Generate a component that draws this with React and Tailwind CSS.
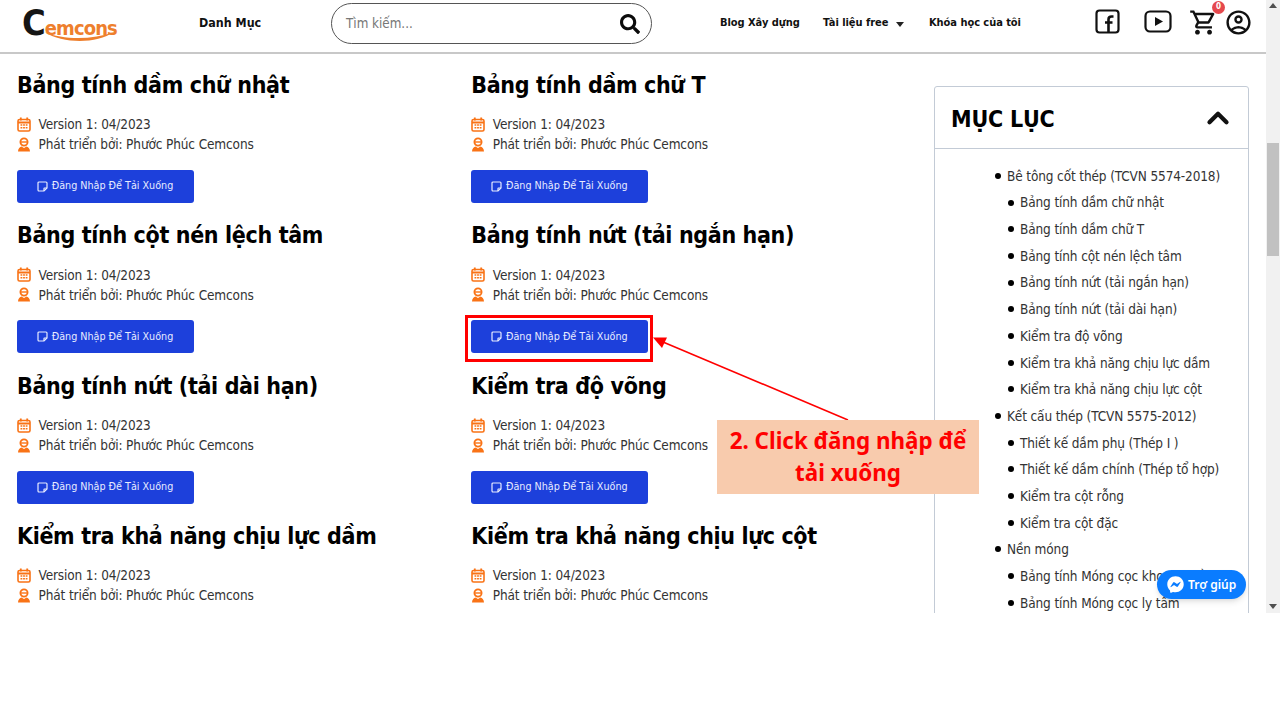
import React from "react";
import { ChevronUp } from "lucide-react";
import { FaSearch, FaFacebookMessenger } from "react-icons/fa";
import { MdOutlineShoppingCart, MdOutlineAccountCircle } from "react-icons/md";

const cards = [
  "Bảng tính dầm chữ nhật", "Bảng tính dầm chữ T",
  "Bảng tính cột nén lệch tâm", "Bảng tính nứt (tải ngắn hạn)",
  "Bảng tính nứt (tải dài hạn)", "Kiểm tra độ võng",
  "Kiểm tra khả năng chịu lực dầm", "Kiểm tra khả năng chịu lực cột",
];

const toc = [
  [1, "Bê tông cốt thép (TCVN 5574-2018)"],
  [2, "Bảng tính dầm chữ nhật"],
  [2, "Bảng tính dầm chữ T"],
  [2, "Bảng tính cột nén lệch tâm"],
  [2, "Bảng tính nứt (tải ngắn hạn)"],
  [2, "Bảng tính nứt (tải dài hạn)"],
  [2, "Kiểm tra độ võng"],
  [2, "Kiểm tra khả năng chịu lực dầm"],
  [2, "Kiểm tra khả năng chịu lực cột"],
  [1, "Kết cấu thép (TCVN 5575-2012)"],
  [2, "Thiết kế dầm phụ (Thép I )"],
  [2, "Thiết kế dầm chính (Thép tổ hợp)"],
  [2, "Kiểm tra cột rỗng"],
  [2, "Kiểm tra cột đặc"],
  [1, "Nền móng"],
  [2, "Bảng tính Móng cọc khoan nhồi"],
  [2, "Bảng tính Móng cọc ly tâm"],
];

function CalIcon() {
  return (
    <svg width="14" height="15" viewBox="0 0 14 15" fill="none" className="shrink-0">
      <rect x="1" y="2.500" width="12" height="11.500" rx="1.600" stroke="#f97316" strokeWidth="1.600" />
      <path d="M1 5.500h12" stroke="#f97316" strokeWidth="2" />
      <path d="M3.800 0.500v3M10.200 0.500v3" stroke="#f97316" strokeWidth="1.800" />
      <path d="M3.500 8h1.800M6.100 8h1.800M8.700 8h1.800M3.500 10.800h1.800M6.100 10.800h1.800M8.700 10.800h1.800" stroke="#f97316" strokeWidth="1.500" />
    </svg>
  );
}

function DevIcon() {
  return (
    <svg width="14" height="15" viewBox="0 0 14 15" fill="none" className="shrink-0">
      <circle cx="7" cy="5" r="3.6" stroke="#f97316" strokeWidth="1.800" />
      <path d="M4 5h6" stroke="#f97316" strokeWidth="1.400" />
      <path d="M1 14.500c0-3 2-4.500 3.500-5L7 11l2.500-1.500c1.500.5 3.500 2 3.500 5z" fill="#f97316" />
    </svg>
  );
}

function NoteIcon() {
  return (
    <svg width="11" height="11" viewBox="0 0 11 11" fill="none" stroke="currentColor" strokeWidth="1.200" className="shrink-0">
      <path d="M2 1h7a1 1 0 0 1 1 1v5L7 10H2a1 1 0 0 1-1-1V2a1 1 0 0 1 1-1z" />
      <path d="M10 7H7.500a.5.5 0 0 0-.5.5V10" />
    </svg>
  );
}

function Card({ title, last }) {
  return (
    <div className="h-[150.3px] w-[454.300px] shrink-0">
      <h2 className="h-[33px] text-[23px] leading-[33px] font-bold tracking-[-0.35px] text-black">{title}</h2>
      <div className="mt-[12.500px] flex h-[20px] items-center gap-[7.500px] text-[13.500px] tracking-[-0.13px] text-[#333]">
        <CalIcon />
        <span>Version 1: 04/2023</span>
      </div>
      <div className="flex h-[20px] items-center gap-[7.500px] text-[13.500px] tracking-[-0.13px] text-[#333]">
        <DevIcon />
        <span>Phát triển bởi: Phước Phúc Cemcons</span>
      </div>
      {!last && (
        <button className="mt-[15.500px] -ml-[0.5px] flex h-[33px] w-[177px] items-center justify-center gap-[4px] rounded-[3px] bg-[#1d40db] text-[10.700px] text-[#e8ecff]">
          <NoteIcon />
          <span>Đăng Nhập Để Tải Xuống</span>
        </button>
      )}
    </div>
  );
}

function Logo() {
  return (
    <div className="relative h-[38px] w-[100px] leading-none">
      <div className="flex items-baseline font-bold">
        <span className="text-[36px] leading-[36px] text-[#151515]">C</span>
        <span className="-ml-[1px] text-[20px] tracking-[-0.9px] text-[#ee7f2d]">emcons</span>
      </div>
      <svg width="72" height="12" viewBox="0 0 72 12" className="absolute left-[22px] top-[26px]">
        <path d="M0 1C20 9 48 9 70 1C52 13 20 13 0 1z" fill="#ee7f2d" />
      </svg>
    </div>
  );
}

function Header() {
  return (
    <header className="flex h-[54px] shrink-0 items-center border-b-2 border-[#c8c8c8] pb-[5px] pl-[22px] pr-[13px]">
      <Logo />
      <div className="-mt-[1px] ml-[77px] w-[132px] text-[12.400px] font-bold text-[#111]">Danh Mục</div>
      <div className="flex h-[41px] w-[321px] items-center justify-between rounded-full border border-[#555] pl-[14px] pr-[11px]">
        <span className="text-[13.300px] text-[#777]">Tìm kiếm...</span>
        <FaSearch size={20} color="#0b0b0b" />
      </div>
      <nav className="ml-[68px] flex items-center text-[11px] font-bold tracking-[-0.05px] whitespace-nowrap text-[#111]">
        <span className="w-[103px]">Blog Xây dựng</span>
        <span className="w-[64px]">Tài liệu free</span>
        <span className="ml-[9px] mt-[1px] h-0 w-0 border-x-[4.500px] border-t-[5px] border-x-transparent border-t-[#222]" />
        <span className="ml-[25px] w-[92px]">Khóa học của tôi</span>
      </nav>
      <div className="-mt-[3px] ml-[74px] flex items-center">
        <svg width="26" height="26" viewBox="0 0 26 26" fill="none" stroke="#111" strokeWidth="2.200">
          <rect x="1.500" y="1.500" width="22" height="22" rx="3" />
          <path d="M18.500 7.500h-2c-2 0-3 1-3 3V23.500M10 13.500h7.500" strokeWidth="2.600" />
        </svg>
        <svg width="28" height="24" viewBox="0 0 28 24" fill="none" stroke="#111" strokeWidth="2.200" className="ml-[23px]">
          <rect x="1.500" y="1.500" width="25" height="20" rx="4.500" />
          <path d="M11 7l8 4.500-8 4.500z" fill="#111" stroke="none" />
        </svg>
        <div className="relative ml-[17px]">
          <MdOutlineShoppingCart size={29} color="#111" />
          <span className="absolute -right-[7px] -top-[7px] flex h-[13px] w-[13px] items-center justify-center rounded-full bg-[#e5484d] text-[8px] font-bold text-white">0</span>
        </div>
        <MdOutlineAccountCircle size={29} color="#111" className="ml-[6px]" />
      </div>
    </header>
  );
}

function Sidebar() {
  return (
    <aside className="mt-[32px] h-[600px] w-[315px] shrink-0 rounded-[3px] border border-[#c3cbd6]">
      <div className="flex h-[62px] items-center justify-between border-b border-[#c3cbd6] pl-[16px] pr-[13px]">
        <span className="mt-[3px] text-[23px] font-bold tracking-[-0.2px] text-black">MỤC LỤC</span>
        <ChevronUp size={34} strokeWidth={3} color="#111" />
      </div>
      <ul className="pl-[60px] pt-[13.500px] text-[13.500px] tracking-[-0.13px] text-[#333]">
        {toc.map(([lvl, text], i) => (
          <li key={i} className={`flex h-[26.700px] items-center whitespace-nowrap ${lvl === 2 ? "pl-[13px]" : ""}`}>
            <span className="mr-[6px] h-[6px] w-[6px] shrink-0 rounded-full bg-black" />
            {text}
          </li>
        ))}
      </ul>
    </aside>
  );
}

function Scrollbar() {
  return (
    <div className="flex h-full w-[14px] shrink-0 flex-col items-center bg-[#f1f1f1]">
      <span className="mt-[3px] h-0 w-0 border-x-[4px] border-b-[5px] border-x-transparent border-b-[#505050]" />
      <span className="mt-[135px] h-[113px] w-[12px] bg-[#c1c1c1]" />
      <span className="mt-auto mb-[4px] h-0 w-0 border-x-[4px] border-t-[5px] border-x-transparent border-t-[#505050]" />
    </div>
  );
}

export default function App() {
  return (
    <div className="relative h-[720px] w-[1280px] overflow-hidden bg-white font-['DejaVu_Sans_Condensed','DejaVu_Sans',sans-serif] [font-stretch:condensed]">
      <div className="flex h-[613px]">
        <div className="flex min-w-0 flex-1 flex-col">
          <Header />
          <div className="flex min-h-0 flex-1 overflow-hidden pl-[17px]">
            <div className="flex w-[917px] shrink-0 flex-wrap content-start pt-[15px]">
              {cards.map((t, i) => <Card key={t} title={t} last={i >= 6} />)}
            </div>
            <Sidebar />
          </div>
        </div>
        <Scrollbar />
      </div>

      {/* overlays */}
      <div className="absolute left-[465px] top-[315px] h-[47px] w-[188px] border-[3px] border-[#ff0000]" />
      <svg className="absolute left-0 top-0" width="1280" height="720" fill="none">
        <path d="M848 420L663 342" stroke="#ff0000" strokeWidth="1.600" />
        <path d="M653 337.500L667 337.500L662 348z" fill="#ff0000" />
      </svg>
      <div className="absolute left-[717px] top-[420px] flex h-[74px] w-[262px] items-center justify-center bg-[#f8cbad] text-center font-['Noto_Sans',sans-serif] text-[22.400px] leading-[32px] font-bold text-[#ff0000] [font-stretch:normal]">
        <span>2. Click đăng nhập để<br />tải xuống</span>
      </div>
      <div className="absolute left-[1157px] top-[570px] flex h-[29px] w-[89px] items-center gap-[4px] rounded-full bg-[#0a7cff] pl-[10px] font-['Noto_Sans',sans-serif] text-[12px] font-semibold text-white shadow-md [font-stretch:normal]">
        <FaFacebookMessenger size={17} />
        <span>Trợ giúp</span>
      </div>
    </div>
  );
}
